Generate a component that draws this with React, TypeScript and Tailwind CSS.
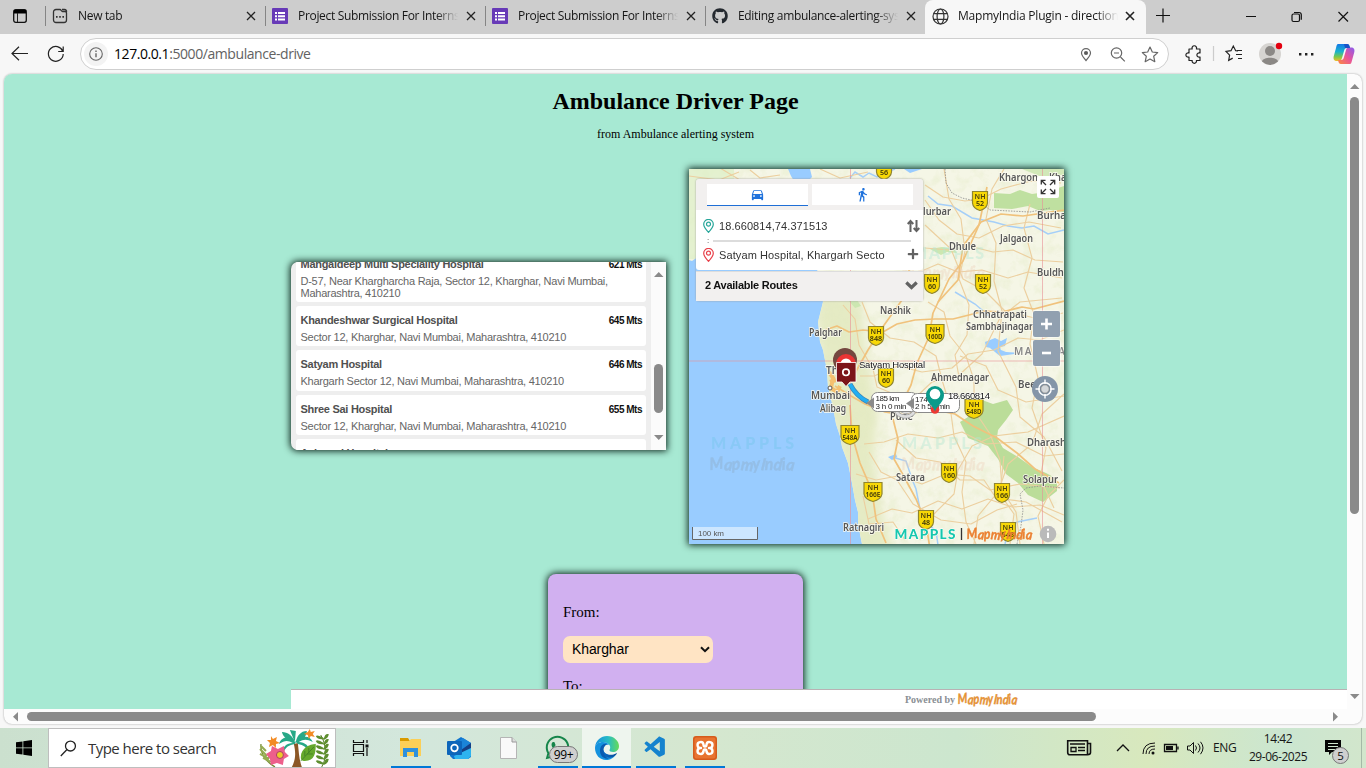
import React from "react";
import { FaGithub, FaWhatsapp, FaPlus } from "react-icons/fa";
import { MdDirectionsCar, MdDirectionsWalk } from "react-icons/md";
import { VscVscode } from "react-icons/vsc";

const ui = "font-['Open_Sans','Noto_Sans',sans-serif]";
const arial = "font-['Liberation_Sans',Arial,sans-serif]";
const serif = "font-['Liberation_Serif',serif]";

/* ---------- browser chrome ---------- */

function CloseX({ bold = false }: { bold?: boolean }) {
  return (
    <svg width="10" height="10" viewBox="0 0 10 10" className="shrink-0">
      <path d="M1 1l8 8M9 1l-8 8" stroke="#222" strokeWidth={bold ? 1.6 : 1.3} />
    </svg>
  );
}

function FormsIcon() {
  return (
    <svg width="16" height="16" viewBox="0 0 16 16">
      <rect width="16" height="16" rx="1" fill="#673ab7" />
      <path d="M3 4h2v2H3zM3 7.3h2v2H3zM3 10.5h2v2H3zM6 4h7v2H6zM6 7.3h7v2H6zM6 10.5h7v2H6z" fill="#fff" />
    </svg>
  );
}

function NewTabIcon() {
  return (
    <svg width="16" height="16" viewBox="0 0 16 16" fill="none" stroke="#333" strokeWidth="1.3">
      <path d="M1.5 4A2.5 2.5 0 0 1 4 1.5h4c1.3 0 1.2 2 2.5 2H13a1.5 1.5 0 0 1 1.5 1.5v7a2.5 2.5 0 0 1-2.5 2.500H4A2.500 2.500 0 0 1 1.500 12zM10 1.500h2.500a2 2 0 0 1 2 2.500" />
      <path d="M4 8.800h1.600M7.200 8.800h1.600M10.400 8.800H12" strokeWidth="1.800" />
    </svg>
  );
}

function GlobeIcon() {
  return (
    <svg width="17" height="17" viewBox="0 0 17 17" fill="none" stroke="#333" strokeWidth="1.2">
      <circle cx="8.500" cy="8.500" r="7.500" />
      <ellipse cx="8.500" cy="8.500" rx="3.400" ry="7.500" />
      <path d="M1.800 5.700h13.400M1.800 11.300h13.400" />
    </svg>
  );
}

function Tab({ icon, title }: { icon: React.ReactNode; title: string }) {
  return (
    <div className="flex h-[34px] w-[220px] shrink-0 items-center pb-[2px]">
      <div className="h-5 w-px bg-[#858585]" />
      <div className="ml-[6px] flex w-4 justify-center">{icon}</div>
      <div className="ml-[10px] w-[160px] overflow-hidden text-[12px] tracking-[-0.32px] whitespace-nowrap text-[#161616] [mask-image:linear-gradient(to_right,#000_86%,transparent)]">
        {title}
      </div>
      <div className="ml-[8px] flex">
        <CloseX />
      </div>
    </div>
  );
}

function TabStrip() {
  return (
    <div className="flex h-[34px] bg-[#cdcdcd]">
      <div className="flex w-[45px] items-center pb-[2px] pl-[13px]">
        <svg width="14" height="14" viewBox="0 0 14 14">
          <rect x=".7" y=".7" width="12.600" height="12.600" rx="2" fill="none" stroke="#111" strokeWidth="1.300" />
          <path d="M1 1h12v3.500H1z" fill="#000" />
          <path d="M4.500 4v9" stroke="#222" />
        </svg>
      </div>
      <Tab icon={<NewTabIcon />} title="New tab" />
      <Tab icon={<FormsIcon />} title="Project Submission For Internship" />
      <Tab icon={<FormsIcon />} title="Project Submission For Internship" />
      <Tab icon={<FaGithub size={16} color="#24292f" />} title="Editing ambulance-alerting-system" />
      <div className="flex h-[34px] w-[221px] items-center rounded-t-[8px] bg-[#f7f7f7] pb-[2px] pl-[7px]">
        <GlobeIcon />
        <div className="ml-[9px] w-[160px] overflow-hidden text-[12px] tracking-[-0.22px] whitespace-nowrap text-[#161616] [mask-image:linear-gradient(to_right,#000_86%,transparent)]">
          MapmyIndia Plugin - direction
        </div>
        <div className="ml-[7px] flex">
          <CloseX bold />
        </div>
      </div>
      <svg width="220" height="34" viewBox="0 0 220 34" fill="none" stroke="#111" strokeWidth="1.200">
        <path d="M10 15.500h14M17 8.500v14M100 16.500h10M192.500 12l9.500 9.500M202 12l-9.500 9.500" />
        <rect x="146" y="14" width="7.500" height="7.500" rx="1.500" />
        <path d="M148 12.500h5a2.300 2.300 0 0 1 2.300 2.300v5" />
      </svg>
    </div>
  );
}

function Toolbar() {
  return (
    <div className="flex h-[39px] items-center bg-[#f7f7f7]">
      <svg width="80" height="39" viewBox="0 0 80 39" fill="none" stroke="#222" strokeWidth="1.200">
        <path d="M12 19.500h16M19 12.800l-7 6.700 7 6.700" />
        <path d="M62.700 17.200a7.400 7.400 0 1 0 .5 2.800M63.200 12.500v5h-5" />
      </svg>
      <div className="flex h-[32px] w-[1089px] items-center rounded-full border border-[#cfcfcf] bg-white pr-[4px] pl-[3px]">
        <div className="flex h-6 w-6 items-center justify-center rounded-full bg-[#f3f3f3]">
          <svg width="14" height="14" viewBox="0 0 14 14" fill="none" stroke="#666" strokeWidth="1.100">
            <circle cx="7" cy="7" r="6.300" />
            <path d="M7 6.200v4M7 3.600v1.300" strokeWidth="1.400" />
          </svg>
        </div>
        <div className="ml-[6px] flex-1 text-[14px] tracking-[-0.43px] text-[#626262]">
          <span className="text-black">127.0.0.1</span>:5000/ambulance-drive
        </div>
        <svg width="84" height="30" viewBox="1080 38.5 84 30" fill="none" stroke="#666" strokeWidth="1.200">
          <path d="M1086 60c-3-3.200-4.500-5.200-4.500-7.400a4.500 4.500 0 0 1 9 0c0 2.200-1.500 4.200-4.500 7.400z" />
          <circle cx="1086" cy="52.500" r="1.500" fill="#555" />
          <circle cx="1116.500" cy="52.500" r="5.200" />
          <path d="M1114 52.500h5M1120.500 56.500l4.300 4.300" />
          <path d="M1150 46.500l2.300 5 5.400.6-4 3.700 1.100 5.400-4.800-2.700-4.800 2.700 1.100-5.400-4-3.700 5.400-.6z" strokeLinejoin="round" />
        </svg>
      </div>
      <svg width="197" height="39" viewBox="1169 34 197 39" fill="none" stroke="#222" strokeWidth="1.200">
        <defs>
          <linearGradient id="cpA" x1="0" y1="0" x2="0" y2="1">
            <stop offset="0" stopColor="#1479e8" />
            <stop offset=".45" stopColor="#19b3cc" />
            <stop offset=".75" stopColor="#79c94b" />
            <stop offset="1" stopColor="#f2bd28" />
          </linearGradient>
          <linearGradient id="cpB" x1="1" y1="0" x2="0" y2="1">
            <stop offset="0" stopColor="#875cf0" />
            <stop offset=".5" stopColor="#e9549a" />
            <stop offset="1" stopColor="#fb8b3d" />
          </linearGradient>
        </defs>
        <path d="M1189 49h3.200a2.300 2.300 0 1 1 4.200 0h3.600v4a2.200 2.200 0 1 0 0 4v3.500h-3.600a2.200 2.200 0 1 1-4.200 0H1189V57a2.200 2.200 0 1 1 0-4z" strokeLinejoin="round" />
        <path d="M1213.500 46v15" stroke="#ccc" />
        <path d="M1238 51l-2.300-.3-2.400-4.700-2.300 4.700-5 .8 3.600 3.600-.9 5.200 4-2.200M1237 50.500h5M1236 54.500h6M1238 58.500h4" />
        <circle cx="1270" cy="54" r="11" fill="#d6d4d1" stroke="none" />
        <circle cx="1270" cy="51" r="5" fill="#8b8885" stroke="none" />
        <path d="M1262 61.500c1-5 15-5 16 0q-8 7-16 0z" fill="#8b8885" stroke="none" />
        <circle cx="1279" cy="46" r="3.200" fill="#e3000f" stroke="none" />
        <path d="M1299 53h2.400v2.400h-2.400zM1305 53h2.400v2.400h-2.400zM1311 53h2.400v2.400h-2.400z" fill="#222" stroke="none" />
        <path d="M1338 44h9c2 0 2.400 1.500 3 4h-3c-2 0-2.500 1-3 3l-2 7c-.5 2-1.500 3-3 3h-2c-3 0-4-2-3.200-5l2.200-8c.6-2.500 1-4 2-4z" fill="url(#cpA)" stroke="none" />
        <path d="M1350 64h-9c-2 0-2.400-1.500-3-4h3c2 0 2.500-1 3-3l2-7c.5-2 1.500-2.500 3-2.500h2c3 0 4 2 3.200 5l-2.200 8c-.6 2.500-1 3.500-2 3.500z" fill="url(#cpB)" stroke="none" />
        <path d="M1344 44h3c2 0 2.400 1.500 3 4h-5z" fill="#1952c7" stroke="none" />
      </svg>
    </div>
  );
}

/* ---------- map ---------- */

function Script({ x, y, size, fill, width, opacity = 1 }: { x: number; y: number; size: number; fill: string; width: number; opacity?: number }) {
  return (
    <text
      x={x}
      y={y}
      fontSize={size}
      fill={fill}
      stroke={fill}
      strokeWidth=".4"
      opacity={opacity}
      textLength={width}
      lengthAdjust="spacingAndGlyphs"
      rotate="-6 7 -3 6 -5 8 0 6 -4 8"
      fontFamily="Lato, sans-serif"
      fontStyle="italic"
      fontWeight="700"
    >
      MapmyIndia
    </text>
  );
}

const shields: [number, number, string][] = [
  [884, 170, "56"], [980, 201, "52"], [932, 284, "60"], [983, 284, "52"], [876, 336, "848"], [935, 334, "160D"],
  [886, 378, "60"], [974, 409, "548D"], [850, 435, "548A"], [949, 473, "160"], [1002, 493, "166"],
  [873, 492, "166E"], [926, 520, "48"], [1008, 532, "548"],
];

const places: [number, number, string, number, number][] = [
  [999, 181, "Khargon", 39, 10.5], [1049, 181, "Khargone", 44, 10.5], [923, 215, "lurbar", 28, 10.5], [1037, 219, "Burhanpur", 52, 10.5],
  [1000, 242, "Jalgaon", 33, 10.5], [949, 250, "Dhule", 27, 10.5], [1037, 276, "Buldhana", 44, 10.5], [880, 314, "Nashik", 31, 10.5],
  [809, 336, "Palghar", 33, 10.5], [973, 318, "Chhatrapati", 54, 10.5], [966, 330, "Sambhajinagar", 67, 10.5],
  [826, 374, "Thane", 30, 10.5], [811, 399, "Mumbai", 39, 11], [820, 412, "Alibag", 26, 10], [931, 381, "Ahmednagar", 58, 10.5],
  [1018, 388, "Beed", 24, 10.5], [890, 420, "Pune", 23, 10.5], [1027, 446, "Dharashiv", 47, 10.5], [896, 481, "Satara", 29, 10.5],
  [1023, 483, "Solapur", 35, 10.5], [843, 531, "Ratnagiri", 41, 10.5],
];

const majorRoads = [
  "M825 330l12-4 12 6 14-2 20 2 14-8 18-4 20-1 18 0 16-4 15-4 18 1 20-5 12 2 30-8",
  "M835 386l16 10 14 8 20 8 12 2 24-2 14-2 20 4 18 12 24 12 20 15 18 16 24 14",
  "M888 170l-4 20 20 30 10 30-12 50-20 28-14 22-18 32",
  "M893 419l5 20-4 20 8 14 14 26 10 24 4 26",
  "M897 413l14-28 6-22 12-26 4-24 16-34 14-18 16-36 8-38",
  "M938 302l20-22 5-34 18-24 20-8 22 2 42-6",
  "M850 405l2 30 8 28 12 28 4 28 10 24",
];

const minorRoads = [
  "M689 176l30 4 20-8M750 170l10 8 20-3M740 180l-20-12M820 169l20 9 28-6",
  "M925 185l18 12 22 4 16-2 20-10 30-8 30 2",
  "M925 200l14 20 18 14 22 4 24-12 26-4 32 6",
  "M944 169l5 30 12 20 4 32-6 28 10 26-2 30-12 20 4 22",
  "M925 248l24 2 20-4 24 6 20-2 22 10 28 2",
  "M924 270l14-6 20 8 24-2 26 8 20-6 34 6",
  "M1004 169l-12 20-6 30 10 24-2 38 8 30-4 40 18 36 4 30 24 20 18 34",
  "M1030 204l-6 24 8 30-8 30 10 26-4 30 8 34-6 30 14 40-6 30 14 30",
  "M1064 330l-24 10-22-2-24 12-26 4-16 14-30 4-24-6-24 10-14 0",
  "M862 302l8 20 20 16 24 4 22 14 6 24 8 26 4 30 12 26-4 30 4 30 10 22",
  "M843 305l12 14 4 26 14 24 4 18 24 10",
  "M928 302l16 10 6 24 16 20 8 24 0 30 16 24 10 26 2 30 14 22 4 32",
  "M864 444l20-2 24-8 30 4 24-6 24 12 30-2 28 14 20-2",
  "M856 474l20 6 22-4 24 8 24-10 24 2 20 14 30-6 40 4",
  "M868 519l24-10 20 4 26-12 24 8 26-10 24 8 28-2 24 10",
  "M869 452l12 20 16 8 16 24 28 16 30 4 26-14 20-6",
  "M920 540l14-26 20-20 4-24 14-24 22-10 34-4 36-16",
  "M974 544l4-28 20-24 10-28 24-20 10-30 22-20",
  "M905 540l-12-18-24 2-6-28",
  "M960 356l26 10 12 24 28 12 38-6",
  "M900 412l32-30 26-6 24-22 18-36 20-16 42-4",
  "M925 225l26 24 12 30 22 12 20 20 34 8 24-6",
  "M896 440l20 18 24 4 20 18 24 0 12 18 30 4 36 20",
  "M1010 544l4-30-14-20 4-38M1044 544l-6-28 10-20 16-16",
];

const land =
  "M689 169H1064V544H862L860 534 858 523 858 512 855 500 852 483 848 463 842 447 840 436 836 424 833 407 830 395 828 387 827 370 823 350 820 342 818 322 823 302 815 258 696 258 692 261 689 260z";

const greenArea =
  "M960 422L968 417 975 408 982 400 993 404 1007 400 1013 410 1006 420 998 430 997 438 1003 448 1018 457 1032 467 1046 473 1057 479 1057 491 1043 502 1028 495 1018 483 1006 474 998 459 988 446 968 438z";

function MapDrawing() {
  return (
    <svg width="375" height="375" viewBox="689 169 375 375" className="block">
      <defs>
        <filter id="terrain" x="0" y="0" width="100%" height="100%">
          <feTurbulence type="fractalNoise" baseFrequency=".09" numOctaves="4" seed="7" />
          <feColorMatrix values="0 0 0 0 .76  0 0 0 0 .82  0 0 0 0 .55  0 0 0 3.200 -1.500" />
        </filter>
        <filter id="soften">
          <feGaussianBlur stdDeviation="5" />
        </filter>
        <clipPath id="landClip">
          <path d={land} />
        </clipPath>
      </defs>
      <rect x="689" y="169" width="375" height="375" fill="#99ccff" />
      <path d={land} fill="#f5f6e6" />
      <g clipPath="url(#landClip)">
        <path d="M815 290l45 2 6 60 12 60-4 50 8 50 12 40h-40l-12-90-20-70z" fill="#e5ebc4" filter="url(#soften)" />
        <rect x="689" y="169" width="375" height="375" filter="url(#terrain)" opacity=".35" />
        <rect x="689" y="169" width="45" height="90" fill="#ddefc6" opacity=".7" />
      </g>
      <path d="M788 169h22l2 8-4 4h-14l-3-5z" fill="#99ccff" />
      <path d="M994 193l16 1 10-4 12 4 14-2 18-6v26l-14-2-10 1-12-5-16 3-18-1z" fill="#bfe0a0" />
      <path d="M1022 169h42v6l-22 2z" fill="#d1e8b8" />
      <path d={greenArea} fill="#bbdd99" />
      <path d="M930 249l12-2 12 2 3 4-10-1-6 3zM849 301l8-1 4 6-6 2z" fill="#cce7b1" />
      <g fill="none" stroke="#a5cff8" strokeWidth="1.500">
        <path d="M850 178l5-6 8 5 6-4 8 4 10-5 8-3M928 196l10 8 14 2 20 12 22 4 14 4 14 2 12-2 14 8 16-4M892 457l14 4 6 18 4 10 4 20 4 12 12 10 2 14M1005 544l4-16 8-6 20-4M955 292l20 12 14 12" />
      </g>
      <path d="M985 342l10-4 6 3 6-3-2 8-5 1 2 7-7-5-9-2zM990 348h6l10 4 16 1-22 3zM888 457l8-3 1 3-5 3zM904 169h18l-12 4z" fill="#99ccff" />
      <g fill="none" stroke="#eccf9f" strokeWidth="1.150" strokeLinejoin="round">
        {minorRoads.map((d) => <path key={d} d={d} />)}
      </g>
      <g fill="none" stroke="#f0c27c" strokeWidth="1.700" strokeLinejoin="round">
        {majorRoads.map((d) => <path key={d} d={d} />)}
      </g>
      <path d="M945 169l1 14 6 10 10 5 18 4 10 8 40 2 20-4M1017 544l4-18 2-16-3-16 6-6 14-2 24 2" fill="none" stroke="#8b8b8b" strokeWidth=".8" strokeDasharray="1.500 1.200" />
      <path d="M850.500 169v375M1042.500 169v375M689 361h375" stroke="#e78f96" strokeWidth=".8" opacity=".75" />
      <path d="M829 372l4 6-2 10 6 4 3-6M830 382l6-2" stroke="#f5c070" strokeWidth="4" fill="none" />
      <g fontFamily="Lato, sans-serif" opacity=".42">
        <text x="711" y="449" fontSize="16" fontWeight="900" fill="#73c5ea" textLength="83">MAPPLS</text>
        <Script x={710} y={470} size={17} fill="#8dacc7" width={84} />
        <text x="902" y="449" fontSize="16" fontWeight="900" fill="#b4e6d5" textLength="80">MAPPLS</text>
        <Script x={902} y={470} size={17} fill="#edcbb4" width={82} opacity={0.8} />
        <text x="912" y="259" fontSize="16" fontWeight="900" fill="#b4e6d5" textLength="72">MAPPLS</text>
        <Script x={902} y={278} size={17} fill="#edcbb4" width={82} opacity={0.8} />
      </g>
      <g fontFamily="Noto Sans, sans-serif" fontWeight="600" fill="#575757" stroke="#fbfaf0" strokeWidth="1.500" paintOrder="stroke">
        {places.map(([x, y, name, w, size]) => (
          <text key={name} x={x} y={y} fontSize={size} textLength={w} lengthAdjust="spacingAndGlyphs">{name}</text>
        ))}
        <text x="1014" y="355" fontSize="10" fill="#858585" letterSpacing="1.500">MAHARA</text>
      </g>
      <circle cx="830" cy="388" r="2" fill="#fff" stroke="#555" />
      {shields.map(([x, y, n], i) => (
        <g key={i} transform={`translate(${x} ${y})`}>
          <path d={n.length > 3 ? "M-9-9.500H9V2Q8 7.500 0 9.500Q-8 7.500-9 2z" : "M-7.500-9.500h15v11.500Q7 7.500 0 9.500Q-7 7.500-7.500 2z"} fill="#f8d806" stroke="#8f8530" strokeWidth="1.200" />
          <text y="-2" fontSize="7" textAnchor="middle" fill="#4a4210" fontFamily="Noto Sans, sans-serif" fontWeight="600">NH</text>
          <text y="4.700" fontSize="7" textAnchor="middle" fill="#3b350b" fontFamily="Noto Sans, sans-serif" fontWeight="600" textLength={n.length > 3 ? 15 : n.length * 4.1} lengthAdjust="spacingAndGlyphs">{n}</text>
        </g>
      ))}
      <path d="M896 408c0 10 14 11 18 4M901 407c0 6 8 6 9 3" fill="none" stroke="#9c9c9c" strokeWidth="4" />
      <path d="M896 408c0 10 14 11 18 4M901 407c0 6 8 6 9 3" fill="none" stroke="#dedede" strokeWidth="2.600" />
      <path d="M850 384q6 12 18 18" fill="none" stroke="#3c83b5" strokeWidth="5" />
      <path d="M850 384q6 12 18 18" fill="none" stroke="#22aef2" strokeWidth="3.400" />
      <rect x="871.500" y="392.500" width="46" height="19" rx="6" fill="#fff" stroke="#8a8a8a" />
      <path d="M866 403l8-5.500v11z" fill="#8a8a8a" />
      <g fontFamily="Liberation Sans, sans-serif" fontSize="8" fill="#222">
        <text x="875.500" y="401" textLength="24">185 km</text>
        <text x="875.500" y="408.500" textLength="31">3 h 0 min</text>
        <rect x="911.500" y="393.500" width="48" height="19" rx="6" fill="#fff" stroke="#8a8a8a" />
        <path d="M906 403.500l8-5.500v11z" fill="#8a8a8a" />
        <text x="915" y="402" textLength="25">174 km</text>
        <text x="915" y="409.300" textLength="35">2 h 50 min</text>
      </g>
      <circle cx="935" cy="409.500" r="4.300" fill="#ed3833" />
      <path d="M935 411.500c-2-6-9-9.500-9-16.500a9 9 0 0 1 18 0c0 7-7 10.500-9 16.500z" fill="#0b9a8a" />
      <circle cx="935" cy="394" r="5.300" fill="#fff" />
      <circle cx="845" cy="360" r="12" fill="#74483f" />
      <circle cx="846" cy="364" r="10" fill="#ea3434" />
      <circle cx="846" cy="364" r="5.500" fill="#fff" />
      <path d="M836.500 362.500h19.500v19.500h-6l-4 4.500-4-4.500h-5.500z" fill="#7c1419" stroke="#fff" strokeWidth=".8" />
      <circle cx="846" cy="372.300" r="3.200" fill="none" stroke="#fff" strokeWidth="1.700" />
      <g fontFamily="Liberation Sans, sans-serif" fontSize="9.500" fill="#111" stroke="#fff" strokeWidth="1" paintOrder="stroke">
        <text x="859" y="368" textLength="66">Satyam Hospital</text>
        <text x="948" y="399" textLength="42">18.660814</text>
      </g>
      <text x="894.500" y="538.500" fontFamily="Lato, sans-serif" fontSize="13.500" fontWeight="900" fill="#17c7ae" textLength="61" stroke="#fff" strokeWidth="1" paintOrder="stroke">MAPPLS</text>
      <path d="M961.500 528v12" stroke="#333" strokeWidth="1.300" />
      <Script x={967} y={539} size={14} fill="#eb8132" width={65} />
      <circle cx="1048" cy="534" r="8.300" fill="#bababa" />
      <path d="M1048 532.500v5.500M1048 528.800v2" stroke="#fff" strokeWidth="2" />
      <path d="M692.500 527v12.500h65V527" fill="#ffffff" fillOpacity=".5" stroke="#666" />
      <text x="698" y="536" fontFamily="Liberation Sans, sans-serif" fontSize="8" fill="#555" textLength="26">100 km</text>
    </svg>
  );
}

function Pin({ color }: { color: string }) {
  return (
    <svg width="11" height="14" viewBox="0 0 11 14" fill="none" stroke={color} strokeWidth="1.200" className="shrink-0">
      <path d="M5.500 13.300C2.500 10 .7 7.500.7 5.200a4.800 4.800 0 0 1 9.600 0c0 2.300-1.800 4.800-4.800 8.100z" />
      <circle cx="5.500" cy="5.200" r="2" />
    </svg>
  );
}

function DirectionsPanel() {
  return (
    <div className={`absolute top-[10px] left-[7px] w-[227px] rounded-[3px] text-[#333] shadow-[0_0_2px_#999] ${arial}`}>
      <div className="flex h-[31px] gap-[4px] rounded-t-[3px] bg-[#f2f0ef] pt-[5px] pl-[11px]">
        <div className="flex h-[22px] w-[101px] items-center justify-center border-b border-[#1f6fd6] bg-white">
          <MdDirectionsCar size={15} color="#1f72dc" />
        </div>
        <div className="flex h-[21px] w-[101px] items-center justify-center bg-white">
          <MdDirectionsWalk size={15} color="#1f72dc" />
        </div>
      </div>
      <div className="h-[60px] rounded-b-[3px] bg-white pr-[3px] pl-[7px]">
        <div className="flex h-[30px] items-center pt-[2px]">
          <Pin color="#27a69a" />
          <div className="ml-[5px] flex-1 text-[11px] tracking-[0.08px]">18.660814,74.371513</div>
          <svg width="13" height="14" viewBox="0 0 13 14" fill="none" stroke="#626262" strokeWidth="2">
            <path d="M3.500 13V2.500M.7 5l2.800-3 2.800 3M9.500 1v10.500M6.700 9l2.800 3 2.800-3" />
          </svg>
        </div>
        <div className="flex h-px items-center">
          <div className="ml-[4px] w-[6px] text-[8px] leading-none">:</div>
          <div className="h-[2px] w-[198px] bg-[#dcdcdc]" />
        </div>
        <div className="flex h-[28px] items-center">
          <Pin color="#e8404a" />
          <div className="ml-[5px] flex-1 text-[11px] tracking-[0.1px] whitespace-nowrap">Satyam Hospital, Khargarh Secto</div>
          <div className="pr-[1px] pb-[2px]"><FaPlus size={12} color="#626262" /></div>
        </div>
      </div>
      <div className="mt-px flex h-[30px] items-center justify-between border-t border-[#ddd] bg-[#f2f0ef] pr-[5px] pb-[2px] pl-[9px] text-[11px] font-bold tracking-[-0.25px] text-[#111]">
        2 Available Routes
        <svg width="13" height="9" viewBox="0 0 13 9" fill="none" stroke="#626262" strokeWidth="3.200"><path d="M1.300 1.500l5.200 5 5.200-5" /></svg>
      </div>
    </div>
  );
}

function MapCard() {
  return (
    <div className="relative h-[375px] w-[375px] overflow-hidden">
      <MapDrawing />
      <DirectionsPanel />
      <div className="absolute top-[7px] left-[348px] flex h-[22px] w-[22px] items-center justify-center rounded-[2px] bg-white">
        <svg width="16" height="16" viewBox="0 0 16 16" fill="none" stroke="#333" strokeWidth="1.300">
          <path d="M1.300 5.500V1.300h4.200M1.300 1.300L6 6M10.500 1.300h4.200v4.200M14.700 1.300L10 6M1.300 10.500v4.200h4.200M1.300 14.700L6 10M14.700 10.500v4.200h-4.200M14.700 14.700L10 10" />
        </svg>
      </div>
      <div className="absolute top-[142px] left-[344px] flex flex-col gap-[3px]">
        {["M6 13.500h11M11.500 8v11", "M7 13.500h9"].map((d) => (
          <div key={d} className="h-[26px] w-[27px] rounded-[2px] bg-[#91a0b0] shadow-[0_0_1px_1px_#fff8]">
            <svg width="27" height="26" viewBox="-2 .5 27 26"><path d={d} stroke="#fff" strokeWidth="2.600" /></svg>
          </div>
        ))}
      </div>
      <div className="absolute top-[207px] left-[343px] h-[26px] w-[26px] rounded-full bg-[#8495a8]">
        <svg width="26" height="26" viewBox="0 0 26 26" fill="none" stroke="#fff" strokeWidth="1.400">
          <circle cx="13" cy="13" r="6.200" />
          <circle cx="13" cy="13" r="4.200" fill="#d4d7da" stroke="#777" strokeWidth=".7" />
          <path d="M13 3.500V8M13 18v4.500M3.500 13H8M18 13h4.500" />
        </svg>
      </div>
    </div>
  );
}

/* ---------- page ---------- */

const hospitals = [
  { name: "Mangaldeep Multi Speciality Hospital", address: "D-57, Near Khargharcha Raja, Sector 12, Kharghar, Navi Mumbai, Maharashtra, 410210", distance: "621 Mts" },
  { name: "Khandeshwar Surgical Hospital", address: "Sector 12, Kharghar, Navi Mumbai, Maharashtra, 410210", distance: "645 Mts" },
  { name: "Satyam Hospital", address: "Khargarh Sector 12, Navi Mumbai, Maharashtra, 410210", distance: "646 Mts" },
  { name: "Shree Sai Hospital", address: "Sector 12, Kharghar, Navi Mumbai, Maharashtra, 410210", distance: "655 Mts" },
  { name: "Ashwani Hospital", address: "Sector 12, Kharghar, Navi Mumbai, Maharashtra, 410210", distance: "" },
];

function HospitalList() {
  return (
    <div className={`mb-px flex h-[188px] w-[375px] overflow-hidden rounded-l-[7px] bg-[#eee] shadow-[0_0_7px_1px_#0b2219] ${arial}`}>
      <div className="-mt-[12px] flex w-[360px] flex-col gap-[4px] pr-[5px] pl-[5px]">
        {hospitals.map((h) => (
          <div key={h.name} className="min-h-[40.300px] shrink-0 rounded-[3px] bg-white pt-[7px] pr-[4px] pb-[3px] pl-[4.500px]">
            <div className="flex justify-between leading-[15px] font-bold">
              <span className="text-[11px] tracking-[-0.28px] text-[#505050]">{h.name}</span>
              <span className="text-[10px] tracking-[-0.5px] text-[#111]">{h.distance}</span>
            </div>
            <div className="pt-[3px] text-[11px] leading-[12px] tracking-[-0.25px] text-[#666]">{h.address}</div>
          </div>
        ))}
      </div>
      <svg width="15" height="188" viewBox="0 0 15 188">
        <rect width="15" height="188" fill="#fbfbfb" />
        <path d="M3 15h9.500L7.750 10zM3 173h9.500l-4.750 5z" fill="#8a8a8a" />
        <rect x="3" y="102" width="9" height="49" rx="4.500" fill="#8a8a8a" />
      </svg>
    </div>
  );
}

function Page() {
  return (
    <div className={`relative h-[635px] w-[1343px] overflow-hidden bg-[#a7e9d3] text-black ${serif}`}>
      <h1 className="pt-[13px] text-center text-[24px] leading-[28px] font-bold">Ambulance Driver Page</h1>
      <p className="pt-[12px] text-center text-[12px] leading-[14px]">from Ambulance alerting system</p>
      <div className="mt-[28px] flex items-center gap-[23px] pl-[287px]">
        <HospitalList />
        <div className="shadow-[0_0_7px_1px_#0b2219]"><MapCard /></div>
      </div>
      <div className="mt-[30px] ml-[544px] h-[200px] w-[255px] rounded-[8px] bg-[#d1b0f0] px-[15px] pt-[29px] text-[15px] shadow-[0_0_7px_1px_#0b2219]">
        <div className="leading-[18px]">From:</div>
        <div className={`mt-[15px] flex h-[27px] w-[150px] items-center justify-between rounded-[7px] bg-[#ffe4c4] pr-[3px] pl-[9px] text-[14px] tracking-[-0.1px] ${arial}`}>
          Kharghar
          <svg width="10" height="7" viewBox="0 0 10 7" fill="none" stroke="#111" strokeWidth="2"><path d="M1 1.200l4 4 4-4" /></svg>
        </div>
        <div className="mt-[14px] leading-[18px]">To:</div>
      </div>
      <div className="absolute right-0 bottom-0 left-[287px] flex h-[20px] items-center border-t border-[#b9b2b4] bg-white pb-px pl-[614px] text-[10px] font-bold text-[#8a8f94]">
        Powered by
        <svg width="64" height="18" viewBox="0 0 64 18"><Script x={3} y={14} size={14} fill="#e59235" width={59} /></svg>
      </div>
    </div>
  );
}

function BrowserView() {
  return (
    <div className="flex h-[655px] bg-[#f7f7f7] px-[4px] pt-px">
      <div className="flex h-[650px] w-[1358px] flex-wrap overflow-hidden rounded-[8px] bg-[#fcfcfc] shadow-[0_0_2px_#999]">
        <Page />
        <svg width="15" height="635" viewBox="0 0 15 635" fill="#8a8a8a">
          <path d="M3 15h9.500L7.750 10zM3 620h9.500l-4.750 5z" />
          <rect x="3" y="23" width="9" height="417" rx="4.500" />
        </svg>
        <svg width="1358" height="15" viewBox="0 0 1358 15" fill="#8a8a8a">
          <path d="M14 3v9.500L9 7.750zM1329 3v9.500l5-4.750z" />
          <rect x="23" y="3" width="1069" height="9" rx="4.500" />
        </svg>
      </div>
    </div>
  );
}

/* ---------- taskbar ---------- */

function Tropical() {
  return (
    <svg width="78" height="38" viewBox="258 729 78 38">
      <path d="M293 767c4-8 4-14 2-23l4-1c1 8 1 16 4 24z" fill="#8c5726" />
      <g fill="#27a887">
        <path d="M297 742c-6-7-14-6-17 2 6-4 9-4 14-1-6 0-11 4-10 10 3-6 6-8 12-9zM297 742c6-7 14-7 17 0-6-3-9-3-14 0 6 0 11 4 11 11-4-6-6-8-12-9zM296 742c-2-6-7-10-13-10 1 5 6 9 13 10zM297 742c1-6 5-11 11-11 0 6-5 10-11 11zM296 742l-5-12 6 1z" />
      </g>
      <path d="M262 744c-1 10 4 17 14 23" fill="none" stroke="#768b34" strokeWidth="1.300" />
      <path d="M262 746l5 5m-6-2l7 7m-7-2l9 5m-6-1l8 4m4-13l-3 9m0-6l-4 7" stroke="#94ac50" strokeWidth="2" />
      <path d="M322 735c5 8 7 22 1 32" fill="none" stroke="#537a26" />
      {[738, 743, 748, 753, 758, 763].map((y) => (
        <path key={y} d={`M325 ${y}q-6-4-8-2 2 4 8 3q1-6 5-5 0 4-5 6`} fill="#5e8e2f" />
      ))}
      <path d="M302 757c0-9 9-13 15-13 0 9-1 17-11 17-3 0-4-1-4-4z" fill="#65a82c" />
      <path d="M302 761l13-14M306 756v-5m4 2v-5m-2 6h6" stroke="#3d7d26" strokeWidth=".8" />
      <path d="M273 746l6 3 6-3 1 6 4 4-5 3-1 6-6-2-6 2-1-6-4-5 5-3z" fill="#ed5f8b" />
      <circle cx="281" cy="755" r="3.500" fill="#eccb28" stroke="#ad386a" />
      <path d="M272 736l2 3 4-2-1 4 4 2-4 1 0 4-3-3-4 2 1-4-3-3 4 0zM311 729l1 3 4-1-2 3 2 3-4-1-2 3-1-4-4-1 4-2z" fill="#f28b25" />
    </svg>
  );
}

function Slot({ children, active = false, line = true }: { children: React.ReactNode; active?: boolean; line?: boolean }) {
  return (
    <div className={`relative flex h-10 w-[49px] shrink-0 flex-col items-center justify-between ${active ? "bg-[#eef5ee]" : ""}`}>
      <div className="flex h-[38px] items-center justify-center pt-px">{children}</div>
      <div className={`h-[2px] shrink-0 ${active ? "w-full" : "w-10"} ${line ? "bg-[#0078d7]" : ""}`} />
    </div>
  );
}

function Taskbar() {
  return (
    <div className="flex h-[40px] bg-[linear-gradient(90deg,#cbe0ce_0%,#d3e7dc_30%,#d5e7cf_52%,#cce6ce_70%,#d8e8bd_84%,#cbe6d0_94%,#d2e6cc_100%)] text-[#171717]">
      <div className="flex w-12 items-center justify-center">
        <svg width="16" height="16" viewBox="0 0 16 16" fill="#000"><path d="M0 2.300L6.500 1.400v6.100H0zM7.300 1.300L16 0v7.500H7.300zM0 8.300h6.500v6.300L0 13.700zM7.300 8.300H16V16l-8.700-1.300z" /></svg>
      </div>
      <div className="flex h-10 w-[288px] items-center border border-[#bebebe] bg-white pl-[11px]">
        <svg width="17" height="17" viewBox="0 0 17 17" fill="none" stroke="#222" strokeWidth="1.300"><circle cx="10.500" cy="6" r="5" /><path d="M7 9.500L.8 16" /></svg>
        <div className="ml-[11px] w-[170px] text-[15px] tracking-[-0.52px] text-[#333]">Type here to search</div>
        <Tropical />
      </div>
      <div className="mr-[2px] flex w-[48px] items-center justify-center">
        <svg width="17" height="16" viewBox="0 0 17 16" fill="none" stroke="#111" strokeWidth="1.200"><path d="M1.500 0v2.500h10V0M1.500 16v-2.500h10V16M1.500 4.500h10v7h-10zM15 0v3M15 8v8" /><path d="M13.500 4.500h3v3h-3z" fill="#111" stroke="none" /></svg>
      </div>
      <Slot>
        <svg width="23" height="20" viewBox="0 0 23 20"><path d="M1 0h8l2 3H1z" fill="#d99a00" /><path d="M1 3h9l2-2h10v17H1z" fill="#fbcf57" /><path d="M4 10h15v9h-4v-5H8v5H4z" fill="#2e91dd" /></svg>
      </Slot>
      <Slot line={false}>
        <svg width="25" height="24" viewBox="0 0 25 24"><path d="M3 8L14 1l10 6v14l-3 2H6l-3-3z" fill="#0f74cf" /><path d="M8 8l8-6 8 5-12 9z" fill="#1b84d8" /><path d="M14 14L24 7v6l-12 8z" fill="#163f84" /><path d="M7 20L24 12v8l-3 3H8z" fill="#2eb3ef" /><rect y="5" width="15" height="14" rx="1" fill="#0d65ba" /><circle cx="7.500" cy="12" r="3.300" fill="none" stroke="#fff" strokeWidth="1.700" /></svg>
      </Slot>
      <Slot line={false}>
        <svg width="17" height="22" viewBox="0 0 17 22"><path d="M.5.500H12l4.500 4.500v16.500H.5z" fill="#f9f9f9" stroke="#b5b5b5" /><path d="M12 .5V5h4.500" fill="#ddd" stroke="#999" /></svg>
      </Slot>
      <Slot>
        <FaWhatsapp size={27} color="#15854a" />
        <div className="absolute top-[18px] left-[16px] flex h-[17px] w-[29px] items-center justify-center rounded-full border border-[#777] bg-[#cfcfcf] text-[12px] tracking-[-0.3px] text-black">99+</div>
      </Slot>
      <Slot active>
        <svg width="24" height="24" viewBox="0 0 24 24">
          <defs>
            <linearGradient id="edA"><stop stopColor="#168de0" /><stop offset=".55" stopColor="#27bcc5" /><stop offset="1" stopColor="#68db58" /></linearGradient>
            <linearGradient id="edB"><stop stopColor="#0a6dc9" /><stop offset="1" stopColor="#0c4a94" /></linearGradient>
          </defs>
          <path d="M0 11C1 4 6 0 12 0c7 0 12 5 12 10 0 4-3 6-6 6-2 0-4-1-3.500-2C17 10 13 6 8 6c-4 0-7 2-8 5z" fill="url(#edA)" />
          <path d="M0 12c0-4 4-6 8-6 3 0 5 1 6 3-4-1-6 1-6 4 0 5 6 8 13 5-2 4-6 6-10 6C5 24 0 19 0 12z" fill="#1592de" />
          <path d="M8 12c-2 6 4 12 10 9 2-1 4-3 4-4-7 4-14 1-14-5z" fill="url(#edB)" />
          <path d="M5 15c0-5 3-8 7-7-6 4-4 12 2 15C9 23 5 20 5 15z" fill="#0b5bb0" />
        </svg>
      </Slot>
      <Slot><VscVscode size={25} color="#1583ce" /></Slot>
      <Slot>
        <svg width="24" height="24" viewBox="0 0 24 24">
          <rect width="24" height="24" rx="3" fill="#d65b1c" />
          <rect x="1.500" y="1.500" width="21" height="21" rx="2" fill="#e87330" />
          <path d="M10.500 8.500a3 3 0 1 0-2.500 3.500a3 3 0 1 0 2.500 3.500q0-2 1.500-2t1.500 2a3 3 0 1 0 2.500-3.500a3 3 0 1 0-2.500-3.500q0 2-1.500 2t-1.500-2z" fill="none" stroke="#fff" strokeWidth="2.400" strokeLinejoin="round" />
        </svg>
      </Slot>
      <div className="flex-1" />
      <svg width="146" height="40" viewBox="1060 728 146 40" fill="none" stroke="#111" strokeWidth="1.300">
        <path d="M1067.700 740.700h19.800v14h-17.500q-2.300 0-2.300-2.300zM1087.500 743.500h3v9q0 2.200-3 2.200" strokeWidth="1.600" />
        <path d="M1070 744h15M1078 747.500h7M1078 750.500h7M1071 747.500h5v4h-5z" />
        <path d="M1117 751l6-6 6 6" />
        <path d="M1143 754q0-11 12-11M1146 754q0-8 9-8M1149 754q0-5 6-5" strokeWidth="1" />
        <circle cx="1153" cy="753" r="1.500" fill="#111" stroke="none" />
        <path d="M1164.500 744.500h12v7h-12zM1178 746.500v3" />
        <path d="M1166 746h7v4h-7z" fill="#111" stroke="none" />
        <path d="M1187.500 746h2.500l3.500-3.500v11L1190 750h-2.500zM1195.500 745.500q2 2.500 0 5M1198 743.500q4 4.500 0 9M1200.500 741.800q5 6 0 12.400" strokeWidth="1" />
      </svg>
      <div className="flex w-[34px] items-center pl-[7px] text-[12px] tracking-[-0.4px]">ENG</div>
      <div className="flex w-[76px] flex-col items-center pt-[2px] text-[12px] leading-[18px] tracking-[-0.45px]"><span>14:42</span><span>29-06-2025</span></div>
      <svg width="50" height="40" viewBox="1316 728 50 40">
        <path d="M1325 740h16v12h-9l-3 3v-3h-4z" fill="#050505" />
        <path d="M1328 743.500h10M1328 746.500h10M1328 749.500h7" stroke="#cfe5ce" />
        <circle cx="1340.500" cy="755.500" r="8" fill="#cfcfcf" stroke="#777" />
        <text x="1337.300" y="759.500" fontSize="11.500" fill="#111" fontFamily="Open Sans, sans-serif">5</text>
        <path d="M1361.500 728v40" stroke="#a5b9a7" />
      </svg>
    </div>
  );
}

export default function App() {
  return (
    <div className={`flex h-[768px] w-[1366px] flex-col overflow-hidden ${ui}`}>
      <TabStrip />
      <Toolbar />
      <BrowserView />
      <Taskbar />
    </div>
  );
}
